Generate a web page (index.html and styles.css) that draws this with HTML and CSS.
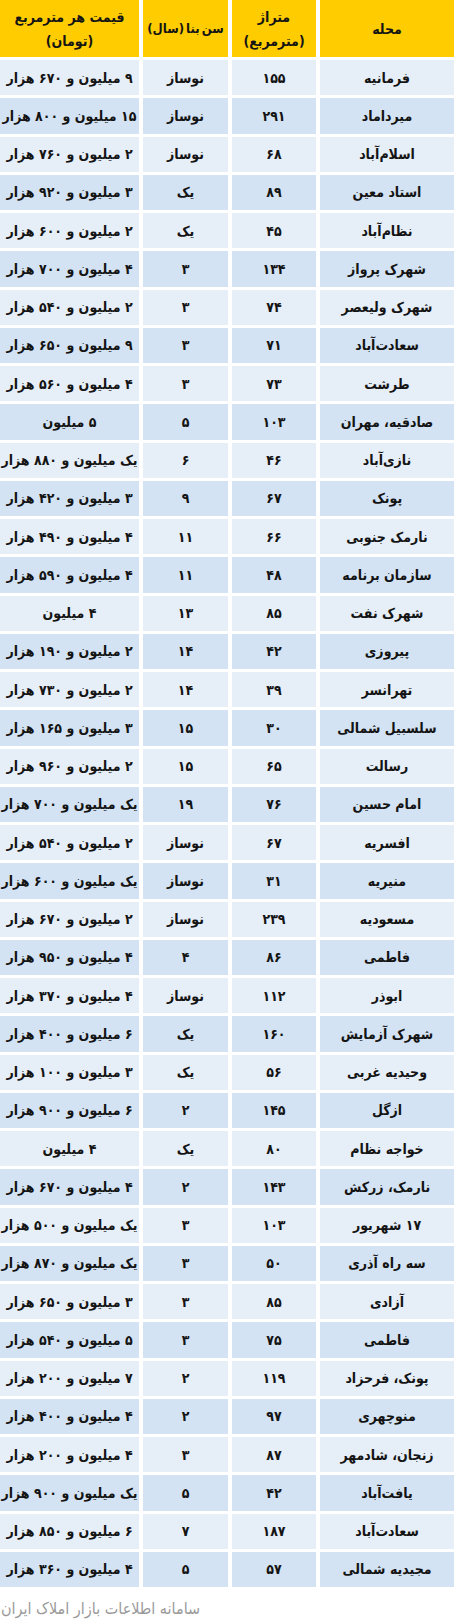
FILE: index.html
```html
<!DOCTYPE html>
<html lang="fa" dir="rtl">
<head>
<meta charset="utf-8">
<title>قیمت مسکن</title>
<link rel="stylesheet" href="styles.css">
</head>
<body>
<div class="table">
  <div class="hcell">محله</div>
  <div class="hcell">متراژ<br>(مترمربع)</div>
  <div class="hcell nowrap">سن بنا (سال)</div>
  <div class="hcell">قیمت هر مترمربع<br>(تومان)</div>

  <div class="cell light">فرمانیه</div><div class="cell light">۱۵۵</div><div class="cell light">نوساز</div><div class="cell light">۹ میلیون و ۶۷۰ هزار</div>
  <div class="cell dark">میرداماد</div><div class="cell dark">۲۹۱</div><div class="cell dark">نوساز</div><div class="cell dark">۱۵ میلیون و ۸۰۰ هزار</div>
  <div class="cell light">اسلام‌آباد</div><div class="cell light">۶۸</div><div class="cell light">نوساز</div><div class="cell light">۲ میلیون و ۷۶۰ هزار</div>
  <div class="cell dark">استاد معین</div><div class="cell dark">۸۹</div><div class="cell dark">یک</div><div class="cell dark">۳ میلیون و ۹۲۰ هزار</div>
  <div class="cell light">نظام‌آباد</div><div class="cell light">۴۵</div><div class="cell light">یک</div><div class="cell light">۲ میلیون و ۶۰۰ هزار</div>
  <div class="cell dark">شهرک پرواز</div><div class="cell dark">۱۳۴</div><div class="cell dark">۳</div><div class="cell dark">۴ میلیون و ۷۰۰ هزار</div>
  <div class="cell light">شهرک ولیعصر</div><div class="cell light">۷۴</div><div class="cell light">۳</div><div class="cell light">۲ میلیون و ۵۴۰ هزار</div>
  <div class="cell dark">سعادت‌آباد</div><div class="cell dark">۷۱</div><div class="cell dark">۳</div><div class="cell dark">۹ میلیون و ۶۵۰ هزار</div>
  <div class="cell light">طرشت</div><div class="cell light">۷۳</div><div class="cell light">۳</div><div class="cell light">۴ میلیون و ۵۶۰ هزار</div>
  <div class="cell dark">صادقیه، مهران</div><div class="cell dark">۱۰۳</div><div class="cell dark">۵</div><div class="cell dark">۵ میلیون</div>
  <div class="cell light">نازی‌آباد</div><div class="cell light">۴۶</div><div class="cell light">۶</div><div class="cell light">یک میلیون و ۸۸۰ هزار</div>
  <div class="cell dark">پونک</div><div class="cell dark">۶۷</div><div class="cell dark">۹</div><div class="cell dark">۳ میلیون و ۴۲۰ هزار</div>
  <div class="cell light">نارمک جنوبی</div><div class="cell light">۶۶</div><div class="cell light">۱۱</div><div class="cell light">۴ میلیون و ۴۹۰ هزار</div>
  <div class="cell dark">سازمان برنامه</div><div class="cell dark">۴۸</div><div class="cell dark">۱۱</div><div class="cell dark">۴ میلیون و ۵۹۰ هزار</div>
  <div class="cell light">شهرک نفت</div><div class="cell light">۸۵</div><div class="cell light">۱۳</div><div class="cell light">۴ میلیون</div>
  <div class="cell dark">پیروزی</div><div class="cell dark">۴۲</div><div class="cell dark">۱۴</div><div class="cell dark">۲ میلیون و ۱۹۰ هزار</div>
  <div class="cell light">تهرانسر</div><div class="cell light">۳۹</div><div class="cell light">۱۴</div><div class="cell light">۲ میلیون و ۷۳۰ هزار</div>
  <div class="cell dark">سلسبیل شمالی</div><div class="cell dark">۳۰</div><div class="cell dark">۱۵</div><div class="cell dark">۳ میلیون و ۱۶۵ هزار</div>
  <div class="cell light">رسالت</div><div class="cell light">۶۵</div><div class="cell light">۱۵</div><div class="cell light">۲ میلیون و ۹۶۰ هزار</div>
  <div class="cell dark">امام حسین</div><div class="cell dark">۷۶</div><div class="cell dark">۱۹</div><div class="cell dark">یک میلیون و ۷۰۰ هزار</div>
  <div class="cell light">افسریه</div><div class="cell light">۶۷</div><div class="cell light">نوساز</div><div class="cell light">۲ میلیون و ۵۴۰ هزار</div>
  <div class="cell dark">منیریه</div><div class="cell dark">۳۱</div><div class="cell dark">نوساز</div><div class="cell dark">یک میلیون و ۶۰۰ هزار</div>
  <div class="cell light">مسعودیه</div><div class="cell light">۲۳۹</div><div class="cell light">نوساز</div><div class="cell light">۲ میلیون و ۶۷۰ هزار</div>
  <div class="cell dark">فاطمی</div><div class="cell dark">۸۶</div><div class="cell dark">۴</div><div class="cell dark">۴ میلیون و ۹۵۰ هزار</div>
  <div class="cell light">ابوذر</div><div class="cell light">۱۱۲</div><div class="cell light">نوساز</div><div class="cell light">۴ میلیون و ۳۷۰ هزار</div>
  <div class="cell dark">شهرک آزمایش</div><div class="cell dark">۱۶۰</div><div class="cell dark">یک</div><div class="cell dark">۶ میلیون و ۴۰۰ هزار</div>
  <div class="cell light">وحیدیه غربی</div><div class="cell light">۵۶</div><div class="cell light">یک</div><div class="cell light">۳ میلیون و ۱۰۰ هزار</div>
  <div class="cell dark">ازگل</div><div class="cell dark">۱۴۵</div><div class="cell dark">۲</div><div class="cell dark">۶ میلیون و ۹۰۰ هزار</div>
  <div class="cell light">خواجه نظام</div><div class="cell light">۸۰</div><div class="cell light">یک</div><div class="cell light">۴ میلیون</div>
  <div class="cell dark">نارمک، زرکش</div><div class="cell dark">۱۴۳</div><div class="cell dark">۲</div><div class="cell dark">۴ میلیون و ۶۷۰ هزار</div>
  <div class="cell light">۱۷ شهریور</div><div class="cell light">۱۰۳</div><div class="cell light">۳</div><div class="cell light">یک میلیون و ۵۰۰ هزار</div>
  <div class="cell dark">سه راه آذری</div><div class="cell dark">۵۰</div><div class="cell dark">۳</div><div class="cell dark">یک میلیون و ۸۷۰ هزار</div>
  <div class="cell light">آزادی</div><div class="cell light">۸۵</div><div class="cell light">۳</div><div class="cell light">۳ میلیون و ۶۵۰ هزار</div>
  <div class="cell dark">فاطمی</div><div class="cell dark">۷۵</div><div class="cell dark">۳</div><div class="cell dark">۵ میلیون و ۵۴۰ هزار</div>
  <div class="cell light">پونک، فرحزاد</div><div class="cell light">۱۱۹</div><div class="cell light">۲</div><div class="cell light">۷ میلیون و ۲۰۰ هزار</div>
  <div class="cell dark">منوچهری</div><div class="cell dark">۹۷</div><div class="cell dark">۲</div><div class="cell dark">۴ میلیون و ۴۰۰ هزار</div>
  <div class="cell light">زنجان، شادمهر</div><div class="cell light">۸۷</div><div class="cell light">۳</div><div class="cell light">۴ میلیون و ۲۰۰ هزار</div>
  <div class="cell dark">یافت‌آباد</div><div class="cell dark">۴۲</div><div class="cell dark">۵</div><div class="cell dark">یک میلیون و ۹۰۰ هزار</div>
  <div class="cell light">سعادت‌آباد</div><div class="cell light">۱۸۷</div><div class="cell light">۷</div><div class="cell light">۶ میلیون و ۸۵۰ هزار</div>
  <div class="cell dark">مجیدیه شمالی</div><div class="cell dark">۵۷</div><div class="cell dark">۵</div><div class="cell dark">۴ میلیون و ۳۶۰ هزار</div>
</div>
<div class="source">سامانه اطلاعات بازار املاک ایران</div>
</body>
</html>
```

FILE: styles.css
```css
html, body {
  margin: 0;
  padding: 0;
  background: #ffffff;
}

body {
  direction: rtl;
  font-family: "DejaVu Sans Condensed", "DejaVu Sans", sans-serif;
  color: #141414;
  width: 454px;
}

.table {
  display: grid;
  grid-template-columns: 134px 84px 85px 139px;
  grid-template-rows: 57px;
  grid-auto-rows: 35.25px;
  column-gap: 4px;
  row-gap: 3px;
}

.hcell {
  background: #ffcc00;
  display: flex;
  align-items: center;
  justify-content: center;
  text-align: center;
  font-weight: bold;
  font-size: 14px;
  line-height: 24px;
  color: #141414;
}

.nowrap {
  white-space: nowrap;
  font-size: 13px;
  word-spacing: -2px;
}

.cell {
  display: flex;
  align-items: center;
  justify-content: center;
  text-align: center;
  font-size: 14px;
  font-weight: bold;
  white-space: nowrap;
  overflow: visible;
}

.light {
  background: #e6eef8;
}

.dark {
  background: #d3e3f3;
}

.source {
  margin-top: 11px;
  text-align: left;
  font-size: 16px;
  line-height: 22px;
  color: #9a9a9a;
  padding-left: 1px;
}
```
